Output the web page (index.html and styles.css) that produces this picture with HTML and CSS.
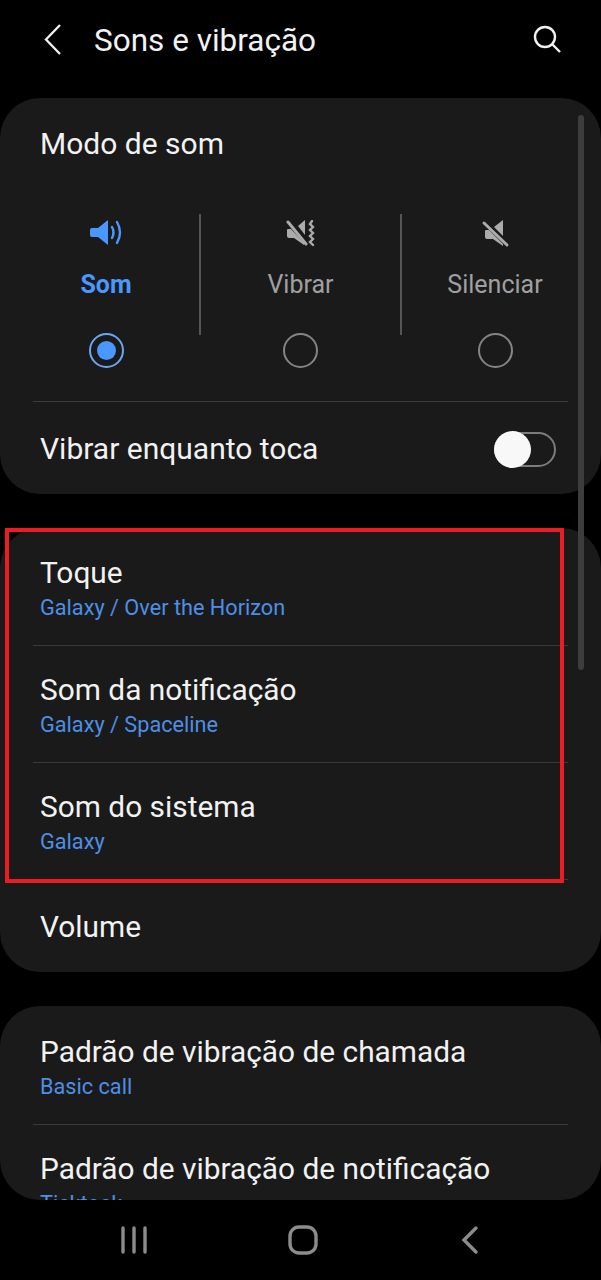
FILE: index.html
```html
<!DOCTYPE html>
<html lang="pt">
	<head>
		<meta charset="utf-8">
		<title>Sons e vibração</title>
		<link rel="stylesheet" href="styles.css">
	</head>
	<body>
		<div class="screen">
			<div class="topbar">
				<svg class="back" width="20" height="32" viewBox="0 0 20 32"><path d="M17 1 L3 15.5 L17 30"/></svg>
				<div class="title">Sons e vibração</div>
				<svg class="search" width="32" height="32" viewBox="0 0 32 32"><circle cx="14" cy="13" r="10"/><path d="M21 20 L29 28"/></svg>
			</div>

			<div class="content">
				<div class="card">
					<div class="mode-title">Modo de som</div>
					<div class="modes">
						<div class="mode active">
							<svg class="mode-icon" width="34" height="28" viewBox="0 0 34 28">
								<path class="fill" d="M3 8 H9 L19 0 V25 L9 17 H3 Q1 17 1 15 V10 Q1 8 3 8 Z"/>
								<path class="line" d="M23 7 Q26 12.5 23 18"/>
								<path class="line" d="M28 2 Q34 12.5 28 23"/>
							</svg>
							<div class="mode-label">Som</div>
							<div class="radio"><div class="dot"></div></div>
						</div>
						<div class="mode">
							<svg class="mode-icon" width="34" height="28" viewBox="0 0 34 28">
								<path class="fill" d="M4 9 H7 L20 23 V25 L10 18 H5 Q3 18 3 16 V10 Q3 9 4 9 Z"/>
								<path class="fill" d="M14 6 L21 0 V15 Z"/>
								<path class="cut" d="M4 2 L22 24"/>
								<path class="line" d="M28 1 L26 4 L29 7 L26 10 L29 13 L26 16 L29 19 L26 22 L29 25"/>
							</svg>
							<div class="mode-label">Vibrar</div>
							<div class="radio"></div>
						</div>
						<div class="mode">
							<svg class="mode-icon" width="34" height="28" viewBox="0 0 34 28">
								<path class="fill" d="M8 10 H11 L25 24 V26 L15 19 H9 Q7 19 7 17 V11 Q7 10 8 10 Z"/>
								<path class="fill" d="M16 7 L25 0 V16 Z"/>
								<path class="cut" d="M6 3 L29 25"/>
							</svg>
							<div class="mode-label">Silenciar</div>
							<div class="radio"></div>
						</div>
					</div>
					<div class="divider"></div>
					<div class="row-toggle">
						<div class="row-title toggle-title">Vibrar enquanto toca</div>
						<div class="switch"><div class="knob"></div></div>
					</div>
				</div>

				<div class="card list-card">
					<div class="row">
						<div class="row-title">Toque</div>
						<div class="row-sub">Galaxy / Over the Horizon</div>
					</div>
					<div class="divider"></div>
					<div class="row">
						<div class="row-title">Som da notificação</div>
						<div class="row-sub">Galaxy / Spaceline</div>
					</div>
					<div class="divider"></div>
					<div class="row">
						<div class="row-title">Som do sistema</div>
						<div class="row-sub">Galaxy</div>
					</div>
					<div class="divider"></div>
					<div class="row-single">
						<div class="row-title">Volume</div>
					</div>
				</div>

				<div class="card list-card last-card">
					<div class="row">
						<div class="row-title">Padrão de vibração de chamada</div>
						<div class="row-sub">Basic call</div>
					</div>
					<div class="divider"></div>
					<div class="row">
						<div class="row-title">Padrão de vibração de notificação</div>
						<div class="row-sub">Ticktock</div>
					</div>
				</div>

				<div class="scrollbar"></div>
			</div>

			<div class="navbar">
				<svg class="nav-icon" width="30" height="28" viewBox="0 0 30 28"><path d="M4 2 V26 M15 2 V26 M26 2 V26"/></svg>
				<svg class="nav-icon" width="30" height="32" viewBox="0 0 30 32"><rect x="2" y="3" width="26" height="26" rx="9"/></svg>
				<svg class="nav-icon nav-back" width="20" height="30" viewBox="0 0 20 30"><path d="M16 3 L4 15 L16 27"/></svg>
			</div>

			<div class="highlight"></div>
		</div>
	</body>
</html>
```

FILE: styles.css
```css
*{
	margin: 0;
	padding: 0;
	box-sizing: border-box;
}
html, body{
	width: 601px;
	height: 1280px;
	background: #000;
	overflow: hidden;
	font-family: Roboto, sans-serif;
}
.screen{
	position: relative;
	width: 601px;
	height: 1280px;
	display: flex;
	flex-direction: column;
}

.topbar{
	height: 98px;
	flex: none;
	display: flex;
	align-items: flex-start;
	padding: 24px 38px 0 43px;
}
.back{
	fill: none;
	stroke: #f2f2f2;
	stroke-width: 2.3;
}
.title{
	flex: 1;
	margin: 1px 0 0 31px;
	font-size: 31.5px;
	line-height: 32px;
	color: #f2f2f2;
}
.search{
	fill: none;
	stroke: #f2f2f2;
	stroke-width: 2.4;
}

.content{
	position: relative;
	height: 1102px;
	flex: none;
	overflow: hidden;
	border-radius: 0 0 40px 40px;
	display: flex;
	flex-direction: column;
	gap: 34px;
}
.card{
	flex: none;
	background: #1a1a1a;
	border-radius: 40px;
}
.list-card{
	padding-top: 1px;
}
.last-card{
	padding-top: 2px;
}
.divider{
	height: 1px;
	margin: 0 33px;
	background: #3a3a3a;
}

.row{
	height: 116px;
	padding: 26px 40px 0;
}
.row-single{
	height: 92px;
	padding: 2px 40px 0;
	display: flex;
	align-items: center;
}
.mode-title{
	height: 92px;
	padding: 0 40px 2px;
	display: flex;
	align-items: center;
	font-size: 30px;
	color: #f2f2f2;
}
.row-title{
	font-size: 29.85px;
	line-height: 36px;
	color: #f2f2f2;
}
.toggle-title{
	font-size: 30px;
}
.row-sub{
	margin-top: 3px;
	font-size: 21.7px;
	line-height: 28px;
	color: #4d8fe6;
}

.modes{
	height: 211px;
	padding: 24px 12px 0;
	display: grid;
	grid-template-columns: 188px 201px 188px;
	align-items: start;
}
.mode{
	height: 121px;
	display: flex;
	flex-direction: column;
	align-items: center;
	box-shadow: -1px 0 0 #555, inset 1px 0 0 #555;
}
.mode:first-child{
	box-shadow: none;
}
.mode-icon{
	flex: none;
	margin-top: 6px;
}
.fill{
	fill: #ababab;
}
.line{
	fill: none;
	stroke: #ababab;
	stroke-width: 2.4;
	stroke-linecap: round;
}
.cut{
	fill: none;
	stroke: #ababab;
	stroke-width: 3;
	stroke-linecap: round;
}
.active .fill{
	fill: #4a97ff;
}
.active .line{
	stroke: #4a97ff;
}
.mode-label{
	margin-top: 23px;
	font-size: 25px;
	line-height: 28px;
	color: #a0a0a0;
}
.active .mode-label{
	font-weight: 700;
	color: #4a97ff;
}
.radio{
	flex: none;
	width: 35px;
	height: 35px;
	margin-top: 34px;
	border: 2px solid #848484;
	border-radius: 50%;
	display: flex;
	align-items: center;
	justify-content: center;
}
.active .radio{
	border-color: #6ba6f2;
}
.dot{
	width: 19px;
	height: 19px;
	border-radius: 50%;
	background: #4a97ff;
}

.row-toggle{
	height: 92px;
	padding: 2px 45px 0 40px;
	display: flex;
	align-items: center;
	justify-content: space-between;
}
.switch{
	position: relative;
	width: 62px;
	height: 35px;
	border: 2px solid #7c7c7c;
	border-radius: 18px;
}
.knob{
	position: absolute;
	left: -2px;
	top: -3px;
	width: 37px;
	height: 37px;
	border-radius: 50%;
	background: #f8f8f8;
}

.scrollbar{
	position: absolute;
	left: 578px;
	top: 17px;
	width: 6px;
	height: 555px;
	border-radius: 3px;
	background: #3d3d3d;
}

.navbar{
	flex: 1;
	display: flex;
	align-items: center;
	gap: 139px;
	padding-left: 119px;
}
.nav-icon{
	flex: none;
	fill: none;
	stroke: #8c8c8c;
	stroke-width: 3.4;
	stroke-linecap: round;
}
.nav-back{
	margin-left: 3px;
}

.highlight{
	position: absolute;
	left: 5px;
	top: 528px;
	width: 559px;
	height: 355px;
	border: 4px solid #ed1c24;
}
```
